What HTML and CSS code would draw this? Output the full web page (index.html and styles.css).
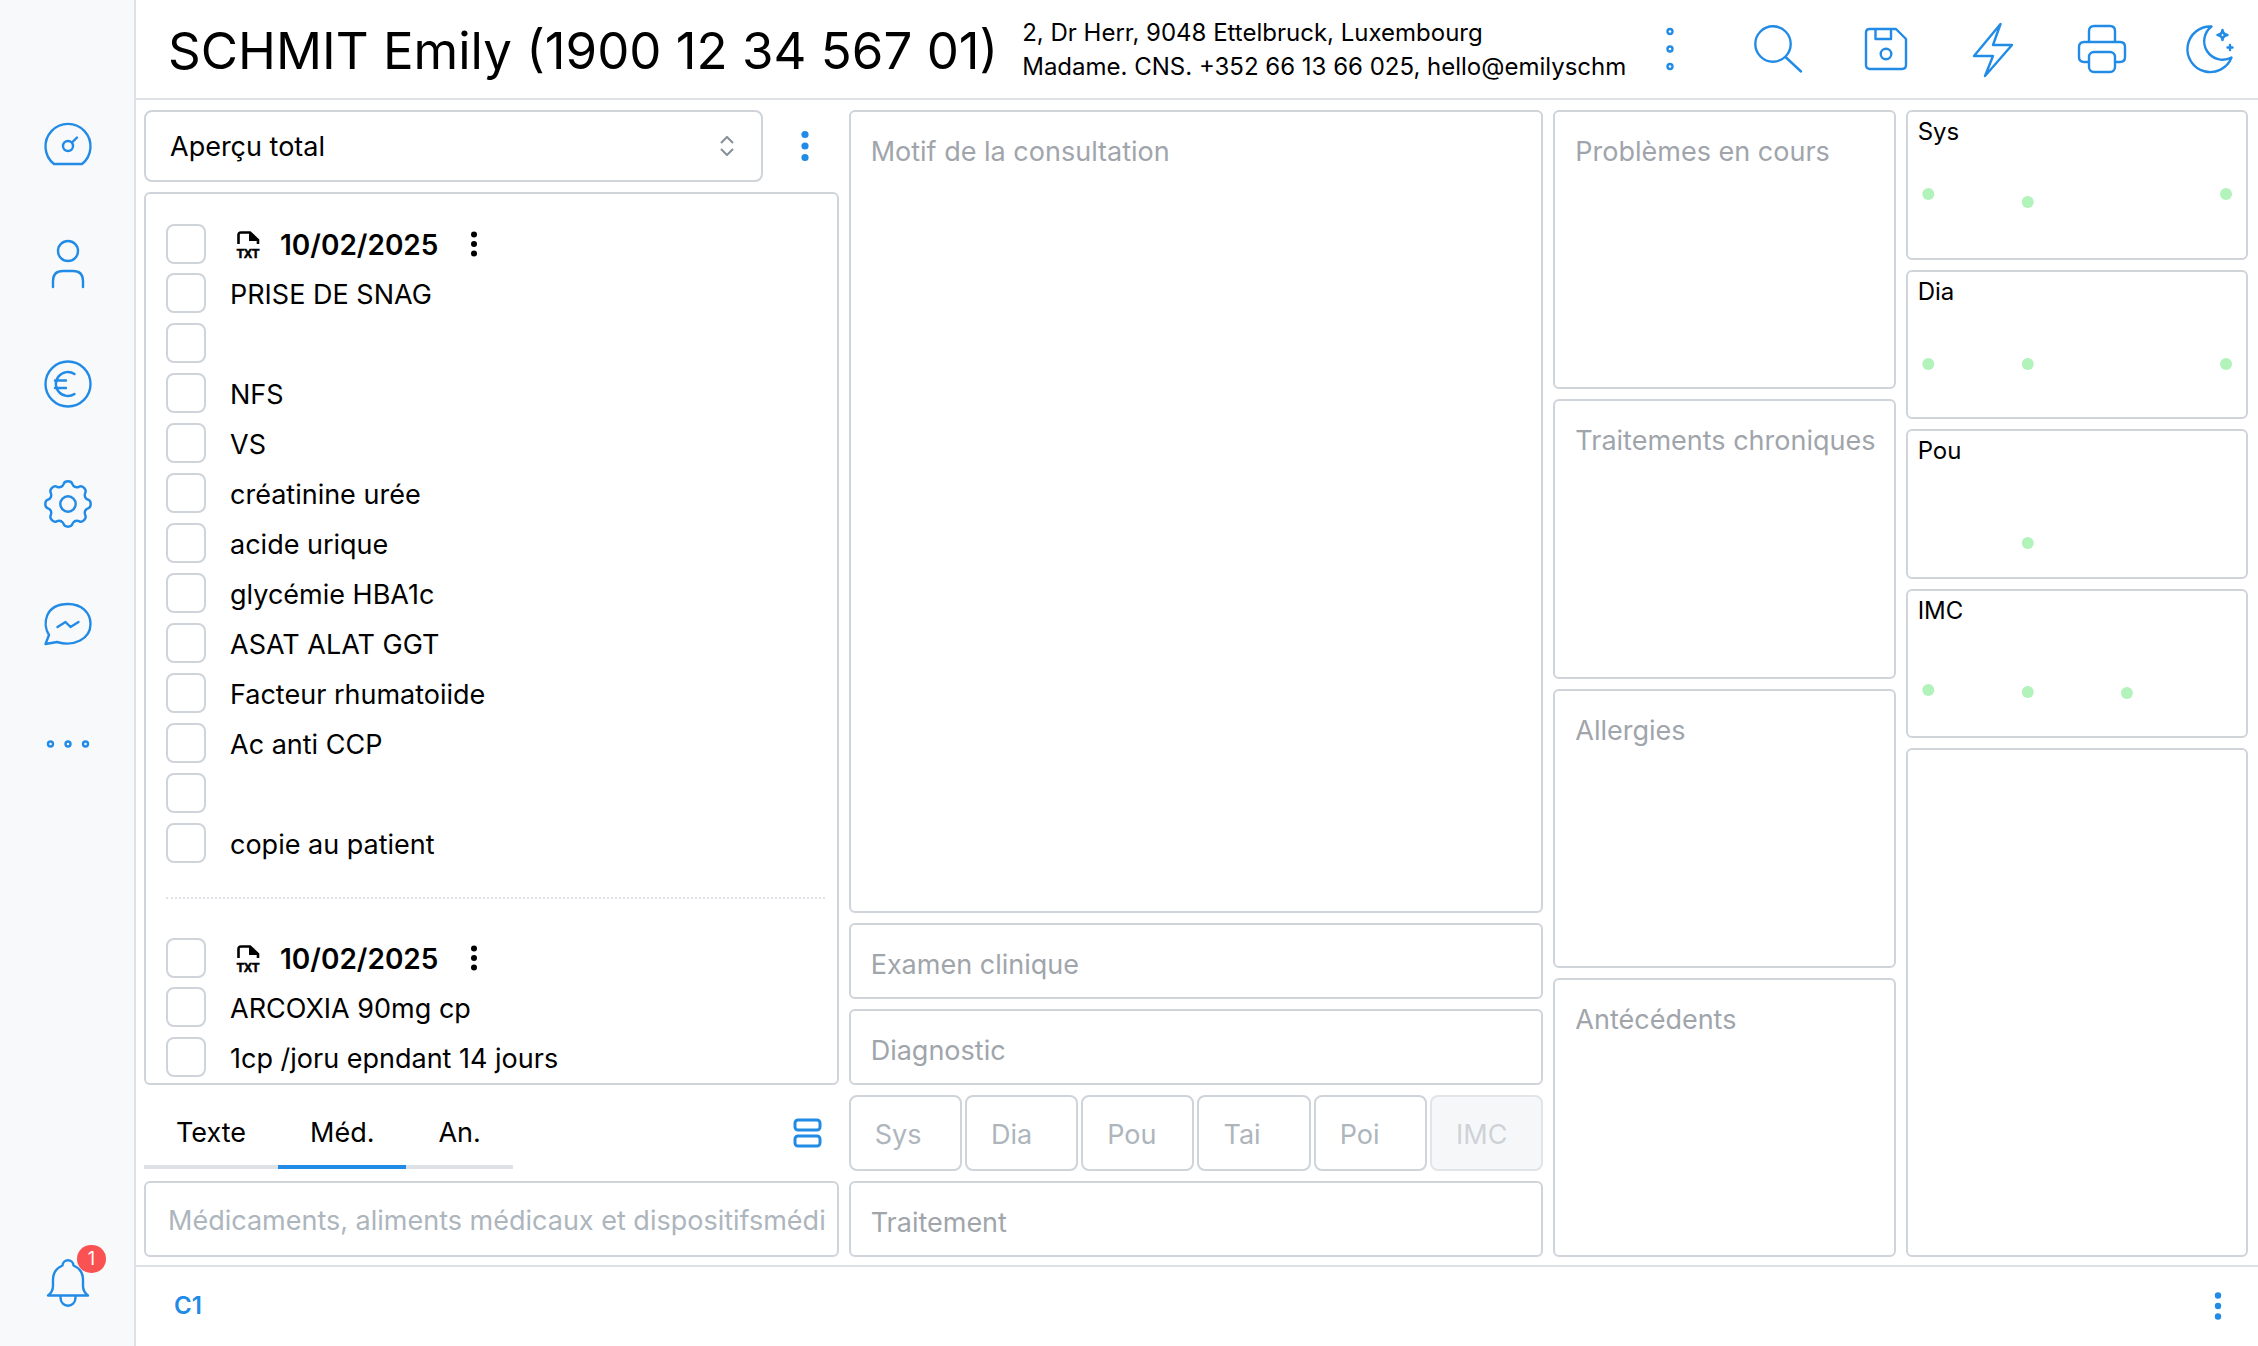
FILE: index.html
```html
<!DOCTYPE html>
<html lang="fr">
<head>
    <meta charset="UTF-8">
    <meta name="viewport" content="width=device-width, initial-scale=1.0">
    <title>SCHMIT Emily</title>
    <link rel="stylesheet" href="styles.css">
</head>
<body>
    <nav class="sidebar">
        <button class="iconButton" aria-label="Tableau de bord">
            <svg class="icon" viewBox="0 0 48 48"><path d="M10 44 A22.5 22.5 0 1 1 38 44 Z"/><circle cx="24" cy="26" r="5"/><path d="M28 22.500 L33 17.500"/></svg>
        </button>
        <button class="iconButton" aria-label="Patients">
            <svg class="icon" viewBox="0 0 48 48"><circle cx="24" cy="11" r="10"/><path d="M9 47 V41 Q9 31 19 31 H29 Q39 31 39 41 V47"/></svg>
        </button>
        <button class="iconButton" aria-label="Facturation">
            <svg class="icon" viewBox="0 0 48 48"><circle cx="24" cy="24" r="22.500"/><path d="M30.500 14 A12 12 0 1 0 30.500 34 M11 20.500 H22 M11 28 H22"/></svg>
        </button>
        <button class="iconButton" aria-label="Réglages">
            <svg class="icon" viewBox="-24 -24 48 48">
                <defs><path id="tooth" d="M-7.080 -17.090 C-4.950 -17.970 -4.800 -18.800 -4.300 -20.200 C-3.700 -22 -2 -22.700 0 -22.700 C2 -22.700 3.700 -22 4.300 -20.200 C4.800 -18.800 4.950 -17.970 7.080 -17.090"/></defs>
                <use href="#tooth"/>
                <use href="#tooth" transform="rotate(45)"/>
                <use href="#tooth" transform="rotate(90)"/>
                <use href="#tooth" transform="rotate(135)"/>
                <use href="#tooth" transform="rotate(180)"/>
                <use href="#tooth" transform="rotate(225)"/>
                <use href="#tooth" transform="rotate(270)"/>
                <use href="#tooth" transform="rotate(315)"/>
                <circle r="7.700"/>
            </svg>
        </button>
        <button class="iconButton" aria-label="Messages">
            <svg class="icon" viewBox="0 0 48 48"><path d="M1.500 44 L5 35 C-2 24 1 4 24 4 C38 4 46.500 13 46.500 24 C46.500 39 30 47 13 42 Z"/><path d="M13.500 27 L21.500 22 L26.500 27 L34.500 22"/></svg>
        </button>
        <button class="iconButton" aria-label="Plus">
            <svg class="icon" viewBox="0 0 48 48"><circle cx="6.500" cy="24" r="2.500"/><circle cx="24" cy="24" r="2.500"/><circle cx="41.500" cy="24" r="2.500"/></svg>
        </button>
        <button class="iconButton bell" aria-label="Notifications">
            <svg class="icon" viewBox="0 0 48 48"><path d="M4 36.500 H44 C40 33.500 39 30 39 27 V21 C39 13 35.500 9 29.500 6.500 C29 -0.500 19 -0.500 18.500 6.500 C12.500 9 9 13 9 21 V27 C9 30 8 33.500 4 36.500 Z M16.500 36.500 V38.500 C16.500 49.500 31.500 49.500 31.500 38.500 V36.500"/></svg>
            <span class="badge">1</span>
        </button>
    </nav>

    <div class="page">
        <header class="header">
            <h1 class="patientName">SCHMIT Emily (1900 12 34 567 01)</h1>
            <div class="patientInfo">
                <div>2, Dr Herr, 9048 Ettelbruck, Luxembourg</div>
                <div>Madame. CNS. +352 66 13 66 025, hello@emilyschm</div>
            </div>
            <div class="actions">
                <button class="iconButton" aria-label="Options du patient">
                    <svg class="icon" viewBox="0 0 48 48"><circle cx="24" cy="6.500" r="2.500"/><circle cx="24" cy="24" r="2.500"/><circle cx="24" cy="41.500" r="2.500"/></svg>
                </button>
                <button class="iconButton" aria-label="Rechercher">
                    <svg class="icon" viewBox="0 0 48 48"><circle cx="19" cy="19" r="17.700"/><path d="M31.500 32 L47 46.500"/></svg>
                </button>
                <button class="iconButton" aria-label="Enregistrer">
                    <svg class="icon" viewBox="0 0 48 48"><path d="M7.500 4 H34 L44 14 V40 Q44 44 40 44 H8 Q4 44 4 40 V7.500 Q4 4 7.500 4 Z M13.500 4 V14 H29 V4"/><circle cx="24" cy="29" r="5.300"/></svg>
                </button>
                <button class="iconButton" aria-label="Actions rapides">
                    <svg class="icon" viewBox="0 0 48 48"><path d="M30.500 -1 L23 20 H42 L15 51 L23 31 H4 Z"/></svg>
                </button>
                <button class="iconButton" aria-label="Imprimer">
                    <svg class="icon" viewBox="0 0 48 48"><path d="M11 17 V6 Q11 1 16 1 H32 Q37 1 37 6 V17 M11 37 H6 Q1 37 1 32 V22 Q1 17 6 17 H42 Q47 17 47 22 V32 Q47 37 42 37 H37"/><rect x="11" y="27" width="26" height="20" rx="5"/></svg>
                </button>
                <button class="iconButton" aria-label="Mode sombre">
                    <svg class="icon" viewBox="0 0 48 48"><path d="M25.500 1.500 A22.800 22.800 0 1 0 45.500 32.500 A18.500 18.500 0 0 1 25.500 1.500 Z"/><path d="M36.500 5 Q37 9.500 41.500 10 Q37 10.500 36.500 15 Q36 10.500 31.500 10 Q36 9.500 36.500 5 Z M44 20 V25 M41.500 22.500 H46.500"/></svg>
                </button>
            </div>
        </header>

        <main class="workspace">
            <section class="history">
                <div class="filterRow">
                    <div class="selectWrap">
                        <select class="select" aria-label="Aperçu">
                            <option>Aperçu total</option>
                        </select>
                        <svg class="chevrons" viewBox="0 0 16 20"><path d="M2 7 L8 1 L14 7 M2 13 L8 19 L14 13"/></svg>
                    </div>
                    <button class="iconButton" aria-label="Options de l'aperçu">
                        <svg class="icon dots" viewBox="0 0 48 48"><circle cx="24" cy="12.500" r="3.600"/><circle cx="24" cy="24" r="3.600"/><circle cx="24" cy="35.500" r="3.600"/></svg>
                    </button>
                </div>

                <div class="entries">
                    <div class="entry">
                        <div class="line lineHead">
                            <input type="checkbox" class="check" id="a0">
                            <label for="a0" class="entryDate">
                                <svg class="fileIcon" viewBox="0 0 24 28"><path d="M2.500 13 V4 Q2.500 1.500 5 1.500 H14 L22 9 V13"/><path class="fold" d="M13 1 L23 10 H13 Z"/><text x="12" y="27">TXT</text></svg>
                                10/02/2025
                            </label>
                            <button class="entryMenu" aria-label="Options">
                                <svg viewBox="0 0 8 28"><circle cx="4" cy="4.500" r="3"/><circle cx="4" cy="14" r="3"/><circle cx="4" cy="23.500" r="3"/></svg>
                            </button>
                        </div>
                        <div class="line"><input type="checkbox" class="check" id="a1"><label for="a1">PRISE DE SNAG</label></div>
                        <div class="line"><input type="checkbox" class="check" aria-label="Ligne vide"></div>
                        <div class="line"><input type="checkbox" class="check" id="a3"><label for="a3">NFS</label></div>
                        <div class="line"><input type="checkbox" class="check" id="a4"><label for="a4">VS</label></div>
                        <div class="line"><input type="checkbox" class="check" id="a5"><label for="a5">créatinine urée</label></div>
                        <div class="line"><input type="checkbox" class="check" id="a6"><label for="a6">acide urique</label></div>
                        <div class="line"><input type="checkbox" class="check" id="a7"><label for="a7">glycémie HBA1c</label></div>
                        <div class="line"><input type="checkbox" class="check" id="a8"><label for="a8">ASAT ALAT GGT</label></div>
                        <div class="line"><input type="checkbox" class="check" id="a9"><label for="a9">Facteur rhumatoiide</label></div>
                        <div class="line"><input type="checkbox" class="check" id="a10"><label for="a10">Ac anti CCP</label></div>
                        <div class="line"><input type="checkbox" class="check" aria-label="Ligne vide"></div>
                        <div class="line"><input type="checkbox" class="check" id="a12"><label for="a12">copie au patient</label></div>
                    </div>
                    <hr class="separator">
                    <div class="entry">
                        <div class="line lineHead">
                            <input type="checkbox" class="check" id="b0">
                            <label for="b0" class="entryDate">
                                <svg class="fileIcon" viewBox="0 0 24 28"><path d="M2.500 13 V4 Q2.500 1.500 5 1.500 H14 L22 9 V13"/><path class="fold" d="M13 1 L23 10 H13 Z"/><text x="12" y="27">TXT</text></svg>
                                10/02/2025
                            </label>
                            <button class="entryMenu" aria-label="Options">
                                <svg viewBox="0 0 8 28"><circle cx="4" cy="4.500" r="3"/><circle cx="4" cy="14" r="3"/><circle cx="4" cy="23.500" r="3"/></svg>
                            </button>
                        </div>
                        <div class="line"><input type="checkbox" class="check" id="b1"><label for="b1">ARCOXIA 90mg cp</label></div>
                        <div class="line"><input type="checkbox" class="check" id="b2"><label for="b2">1cp /joru epndant 14 jours</label></div>
                    </div>
                </div>

                <div class="tabRow">
                    <div class="tabs" role="tablist">
                        <button class="tab" role="tab">Texte</button>
                        <button class="tab active" role="tab" aria-selected="true">Méd.</button>
                        <button class="tab" role="tab">An.</button>
                    </div>
                    <button class="iconButton" aria-label="Disposition">
                        <svg class="icon rows" viewBox="0 0 48 48"><rect x="12" y="11" width="25" height="10" rx="3"/><rect x="12" y="27" width="25" height="10" rx="3"/></svg>
                    </button>
                </div>

                <input type="text" class="field medField" aria-label="Médicaments" placeholder="Médicaments, aliments médicaux et dispositifsmédi">
            </section>

            <section class="consultation">
                <textarea class="note" aria-label="Motif de la consultation" placeholder="Motif de la consultation"></textarea>
                <textarea class="note" aria-label="Examen clinique" placeholder="Examen clinique"></textarea>
                <textarea class="note" aria-label="Diagnostic" placeholder="Diagnostic"></textarea>
                <div class="vitals">
                    <input type="text" class="field" aria-label="Sys" placeholder="Sys">
                    <input type="text" class="field" aria-label="Dia" placeholder="Dia">
                    <input type="text" class="field" aria-label="Pou" placeholder="Pou">
                    <input type="text" class="field" aria-label="Tai" placeholder="Tai">
                    <input type="text" class="field" aria-label="Poi" placeholder="Poi">
                    <input type="text" class="field" aria-label="IMC" placeholder="IMC" disabled>
                </div>
                <textarea class="note" aria-label="Traitement" placeholder="Traitement"></textarea>
            </section>

            <section class="background">
                <textarea class="note" aria-label="Problèmes en cours" placeholder="Problèmes en cours"></textarea>
                <textarea class="note" aria-label="Traitements chroniques" placeholder="Traitements chroniques"></textarea>
                <textarea class="note" aria-label="Allergies" placeholder="Allergies"></textarea>
                <textarea class="note" aria-label="Antécédents" placeholder="Antécédents"></textarea>
            </section>

            <section class="charts">
                <div class="chart">
                    <div class="chartTitle">Sys</div>
                    <svg class="plot"><circle cx="6%" cy="42" r="6"/><circle cx="35.400%" cy="50" r="6"/><circle cx="94%" cy="42" r="6"/></svg>
                </div>
                <div class="chart">
                    <div class="chartTitle">Dia</div>
                    <svg class="plot"><circle cx="6%" cy="52" r="6"/><circle cx="35.400%" cy="52" r="6"/><circle cx="94%" cy="52" r="6"/></svg>
                </div>
                <div class="chart">
                    <div class="chartTitle">Pou</div>
                    <svg class="plot"><circle cx="35.400%" cy="72" r="6"/></svg>
                </div>
                <div class="chart">
                    <div class="chartTitle">IMC</div>
                    <svg class="plot"><circle cx="6%" cy="59" r="6"/><circle cx="35.400%" cy="61" r="6"/><circle cx="64.700%" cy="62" r="6"/></svg>
                </div>
                <div class="chart"></div>
            </section>
        </main>

        <footer class="footer">
            <a href="#" class="consultLink">C1</a>
            <button class="iconButton" aria-label="Options de la consultation">
                <svg class="icon dots" viewBox="0 0 48 48"><circle cx="24" cy="13.500" r="3.200"/><circle cx="24" cy="24" r="3.200"/><circle cx="24" cy="34.500" r="3.200"/></svg>
            </button>
        </footer>
    </div>
</body>
</html>
```
FILE: styles.css
```css
* {
    box-sizing: border-box;
}

body {
    margin: 0;
    display: flex;
    height: 100vh;
    font-family: Inter, "Liberation Sans", sans-serif;
    font-size: 27px;
    line-height: 36px;
    color: #000;
    background-color: #fff;
}

button, input, select, textarea {
    font: inherit;
    color: inherit;
    margin: 0;
}

button {
    padding: 0;
    border: none;
    background: none;
    cursor: pointer;
}

/* icons */
.iconButton {
    width: 48px;
    height: 48px;
    flex: none;
}

.icon {
    display: block;
    width: 48px;
    height: 48px;
    overflow: visible;
    fill: none;
    stroke: #228be6;
    stroke-width: 2.4;
    stroke-linecap: round;
    stroke-linejoin: round;
}

.icon.dots {
    fill: #228be6;
    stroke: none;
}

.icon.rows {
    stroke-width: 3;
}

/* left navigation */
.sidebar {
    flex: none;
    width: 136px;
    padding: 120px 0 39px 2px;
    display: flex;
    flex-direction: column;
    align-items: center;
    gap: 72px;
    background-color: #f8f9fb;
    border-right: 2px solid #dee2e6;
}

.bell {
    position: relative;
    margin-top: auto;
}

.badge {
    position: absolute;
    top: -14px;
    right: -14px;
    width: 29px;
    height: 28px;
    border-radius: 14px;
    background-color: #fa5252;
    color: #fff;
    font-size: 18px;
    line-height: 28px;
    text-align: center;
}

.page {
    flex: 1;
    min-width: 0;
    display: flex;
    flex-direction: column;
}

/* patient header */
.header {
    flex: none;
    height: 100px;
    padding: 0 24px 0 32px;
    display: flex;
    align-items: center;
    border-bottom: 2px solid #dee2e6;
}

.patientName {
    margin: 0;
    padding-top: 4px;
    font-size: 51px;
    font-weight: 400;
    line-height: 64px;
    white-space: nowrap;
}

.patientInfo {
    flex: 1;
    min-width: 0;
    margin: 0 12px 0 24px;
    padding-top: 2px;
    overflow: hidden;
    font-size: 24px;
    line-height: 34px;
    white-space: nowrap;
}

.actions {
    display: flex;
    gap: 60px;
}

/* four columns of panels */
.workspace {
    flex: 1;
    min-height: 0;
    padding: 10px 10px 8px 8px;
    display: grid;
    grid-template-columns: repeat(6, minmax(0, 1fr));
    grid-template-rows: minmax(0, 1fr);
    gap: 10px;
}

.history, .consultation {
    grid-column: span 2;
}

.history, .consultation, .background, .charts {
    display: grid;
    grid-template-columns: minmax(0, 1fr);
    gap: 10px;
    min-height: 0;
}

.history {
    grid-template-rows: 72px minmax(0, 1fr) 76px 76px;
}

.consultation {
    grid-template-rows: minmax(0, 1fr) repeat(4, 76px);
}

.background {
    grid-template-rows: repeat(4, minmax(0, 1fr));
}

.charts {
    grid-template-rows: repeat(4, minmax(0, 1fr)) minmax(0, 3.4fr);
}

.filterRow {
    display: flex;
    align-items: center;
    gap: 18px;
    padding-right: 10px;
}

.selectWrap {
    position: relative;
    flex: 1;
}

.select {
    appearance: none;
    width: 100%;
    height: 72px;
    padding: 2px 64px 0 24px;
    border: 2px solid #ced4da;
    border-radius: 8px;
    background-color: #fff;
}

.chevrons {
    position: absolute;
    top: 26px;
    right: 28px;
    width: 16px;
    height: 20px;
    fill: none;
    stroke: #868e96;
    stroke-width: 2;
    pointer-events: none;
}

/* history list */
.entries {
    padding: 25px 12px 0 20px;
    overflow: hidden;
    border: 2px solid #ced4da;
    border-radius: 6px;
}

.line {
    display: flex;
    align-items: center;
    gap: 24px;
    height: 50px;
}

.line label {
    padding-top: 3px;
}

.lineHead {
    height: 49px;
}

.check {
    appearance: none;
    flex: none;
    width: 40px;
    height: 40px;
    border: 2px solid #ced4da;
    border-radius: 8px;
    background-color: #fff;
}

.check:checked {
    background-color: #228be6;
    border-color: #228be6;
}

.entryDate {
    display: flex;
    align-items: center;
    gap: 20px;
    padding-left: 6px;
    font-size: 28px;
    font-weight: 600;
}

.fileIcon {
    width: 24px;
    height: 28px;
    overflow: visible;
}

.fileIcon path {
    fill: none;
    stroke: #000;
    stroke-width: 2.6;
}

.fileIcon .fold {
    fill: #000;
    stroke: none;
}

.fileIcon text {
    font-family: "Liberation Sans", sans-serif;
    font-size: 12px;
    font-weight: 700;
    text-anchor: middle;
    stroke: #000;
    stroke-width: 0.6;
}

.entryMenu {
    width: 24px;
    height: 28px;
}

.entryMenu svg {
    display: block;
    width: 8px;
    height: 28px;
    margin: auto;
}

.separator {
    margin: 29px 0 34px;
    border: none;
    border-top: 2px dotted #dee2e6;
}

/* tabs under the list */
.tabRow {
    display: flex;
    align-items: center;
    justify-content: space-between;
    padding-right: 8px;
}

.tabs {
    display: flex;
}

.tab {
    height: 72px;
    padding: 4px 32px 0;
    border-bottom: 4px solid #dee2e6;
}

.tab.active {
    border-bottom-color: #228be6;
}

/* text fields */
.field {
    width: 100%;
    min-width: 0;
    height: 76px;
    padding: 2px 22px 0 24px;
    border: 2px solid #ced4da;
    border-radius: 8px;
    background-color: #fff;
}

.field::placeholder {
    color: #adb5bd;
    opacity: 1;
}

.field:disabled {
    background-color: #f1f3f5;
    opacity: 0.6;
}

.medField {
    padding-left: 22px;
    padding-right: 2px;
    border-radius: 6px;
}

.note {
    display: block;
    width: 100%;
    height: 100%;
    padding: 22px 8px 0 20px;
    border: 2px solid #ced4da;
    border-radius: 6px;
    background-color: #fff;
    resize: none;
    overflow: hidden;
}

.note::placeholder {
    color: #a0a5ab;
    opacity: 1;
}

.vitals {
    display: grid;
    grid-template-columns: repeat(6, minmax(0, 1fr));
    gap: 3px;
}

/* small charts */
.chart {
    display: flex;
    flex-direction: column;
    min-height: 0;
    border: 2px solid #ced4da;
    border-radius: 6px;
}

.chartTitle {
    padding-left: 10px;
    font-size: 24px;
    line-height: 40px;
}

.plot {
    flex: 1;
    width: 100%;
    min-height: 0;
    fill: #b2f2bb;
}

.footer {
    flex: none;
    height: 81px;
    padding: 0 16px 2px 38px;
    display: flex;
    align-items: center;
    justify-content: space-between;
    border-top: 2px solid #dee2e6;
}

.consultLink {
    color: #228be6;
    font-size: 24px;
    font-weight: 600;
    text-decoration: none;
}
```
